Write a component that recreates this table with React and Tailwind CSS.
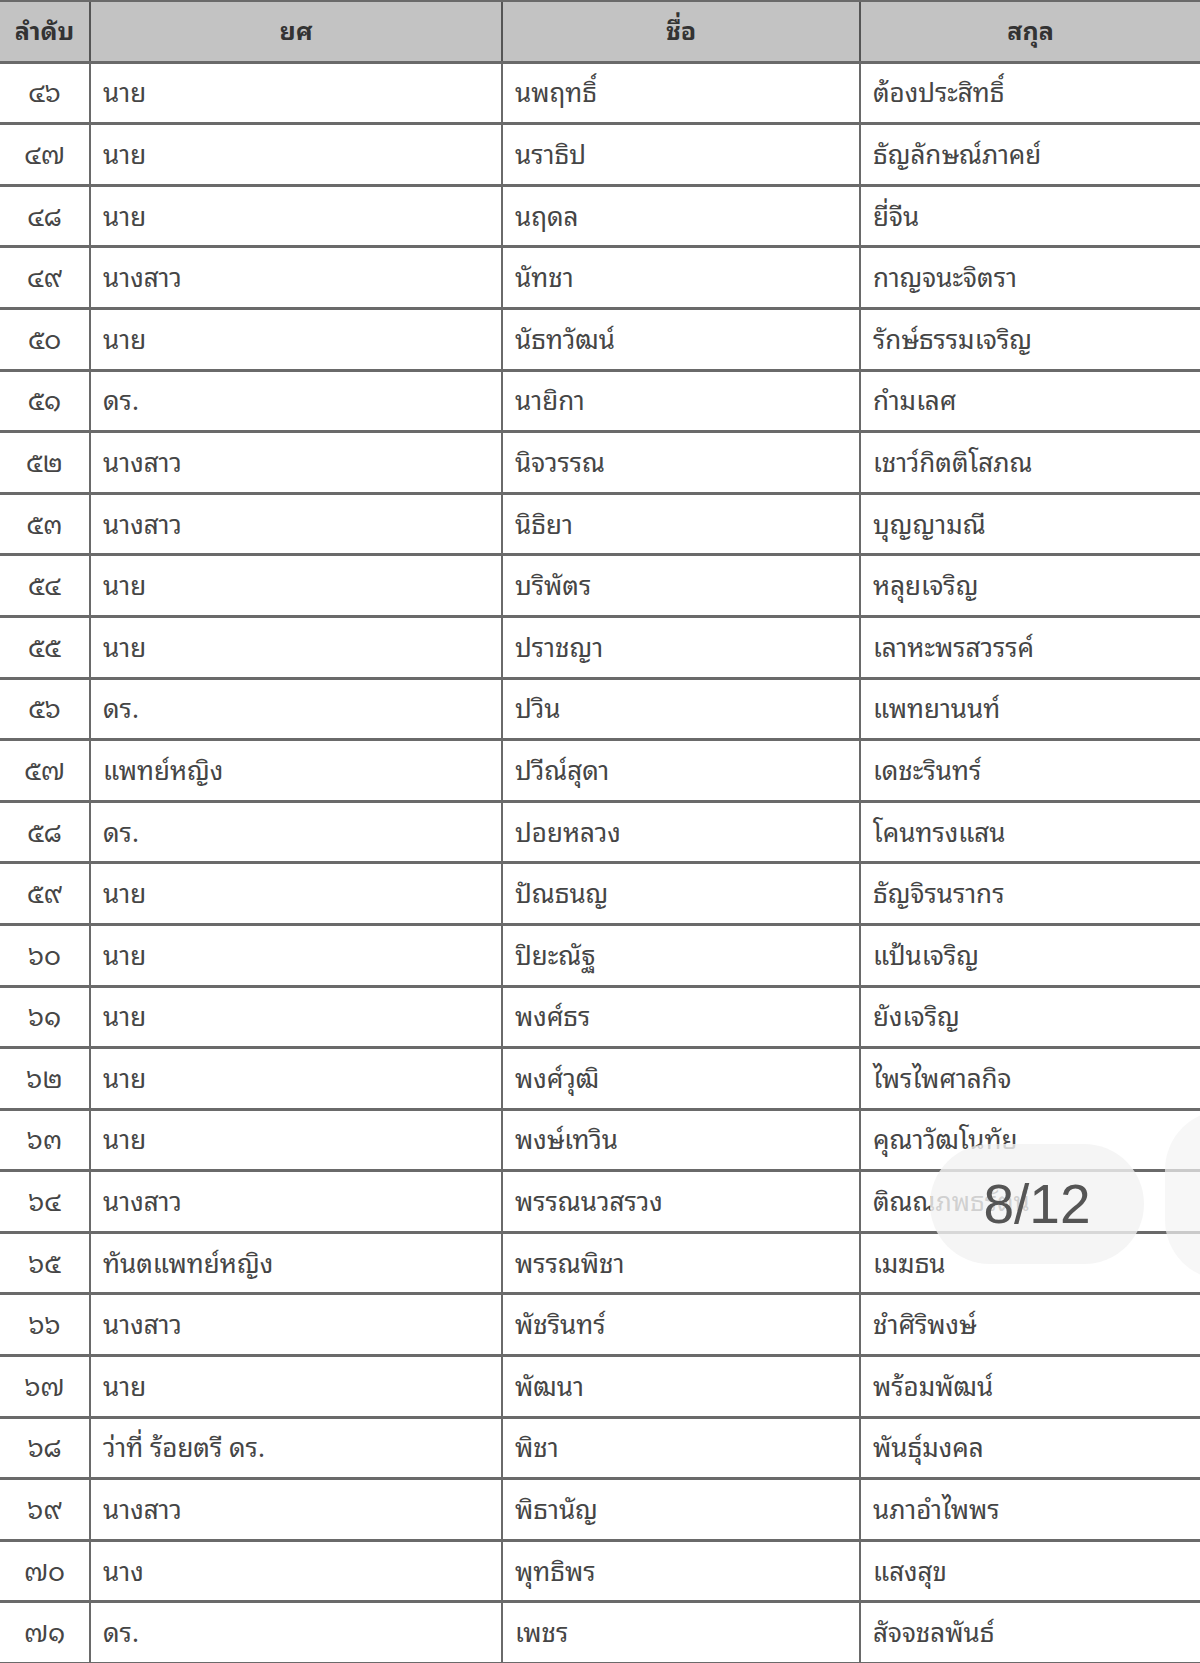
import React from "react";

const rows = [
  ["๔๖", "นาย", "นพฤทธิ์", "ต้องประสิทธิ์"],
  ["๔๗", "นาย", "นราธิป", "ธัญลักษณ์ภาคย์"],
  ["๔๘", "นาย", "นฤดล", "ยี่จีน"],
  ["๔๙", "นางสาว", "นัทชา", "กาญจนะจิตรา"],
  ["๕๐", "นาย", "นัธทวัฒน์", "รักษ์ธรรมเจริญ"],
  ["๕๑", "ดร.", "นายิกา", "กำมเลศ"],
  ["๕๒", "นางสาว", "นิจวรรณ", "เชาว์กิตติโสภณ"],
  ["๕๓", "นางสาว", "นิธิยา", "บุญญามณี"],
  ["๕๔", "นาย", "บริพัตร", "หลุยเจริญ"],
  ["๕๕", "นาย", "ปราชญา", "เลาหะพรสวรรค์"],
  ["๕๖", "ดร.", "ปวิน", "แพทยานนท์"],
  ["๕๗", "แพทย์หญิง", "ปวีณ์สุดา", "เดชะรินทร์"],
  ["๕๘", "ดร.", "ปอยหลวง", "โคนทรงแสน"],
  ["๕๙", "นาย", "ปัณธนญ", "ธัญจิรนรากร"],
  ["๖๐", "นาย", "ปิยะณัฐ", "แป้นเจริญ"],
  ["๖๑", "นาย", "พงศ์ธร", "ยังเจริญ"],
  ["๖๒", "นาย", "พงศ์วุฒิ", "ไพรไพศาลกิจ"],
  ["๖๓", "นาย", "พงษ์เทวิน", "คุณาวัฒโนทัย"],
  ["๖๔", "นางสาว", "พรรณนวสรวง", "ติณณภพธรัตน์"],
  ["๖๕", "ทันตแพทย์หญิง", "พรรณพิชา", "เมฆธน"],
  ["๖๖", "นางสาว", "พัชรินทร์", "ชำศิริพงษ์"],
  ["๖๗", "นาย", "พัฒนา", "พร้อมพัฒน์"],
  ["๖๘", "ว่าที่ ร้อยตรี ดร.", "พิชา", "พันธุ์มงคล"],
  ["๖๙", "นางสาว", "พิธานัญ", "นภาอำไพพร"],
  ["๗๐", "นาง", "พุทธิพร", "แสงสุข"],
  ["๗๑", "ดร.", "เพชร", "สัจจชลพันธ์"],
];

const grid = "grid grid-cols-[91px_412px_358px_1fr] h-[61.6px] border-b-[3px] border-[#6a6a6a]";

export default function App() {
  return (
    <div
      className="relative w-[1200px] h-[1663px] overflow-hidden bg-white text-[#454545]"
      style={{ fontFamily: '"Noto Sans Thai Looped", "Loma", "Garuda", "Norasi", "Noto Sans Thai", "DejaVu Sans", sans-serif' }}
    >
      <div className="border-t-2 border-[#6a6a6a]">
        <div className={grid + " bg-[#c3c3c3] font-bold text-[25px] text-[#333]"}>
          <div className="flex items-center justify-center pb-[3px] border-r-2 border-[#555]">ลำดับ</div>
          <div className="flex items-center justify-center pb-[3px] border-r-2 border-[#555]">ยศ</div>
          <div className="flex items-center justify-center pb-[3px] border-r-2 border-[#555]">ชื่อ</div>
          <div className="flex items-center justify-center pb-[3px]">สกุล</div>
        </div>
        {rows.map((r) => (
          <div key={r[0]} className={grid + " text-[26px]"}>
            <div className="flex items-center justify-center pb-[4px] border-r-2 border-[#6a6a6a]">{r[0]}</div>
            <div className="flex items-center pl-[12px] pb-[4px] border-r-2 border-[#6a6a6a]">{r[1]}</div>
            <div className="flex items-center pl-[12px] pb-[4px] border-r-2 border-[#6a6a6a]">{r[2]}</div>
            <div className="flex items-center pl-[12px] pb-[4px]">{r[3]}</div>
          </div>
        ))}
      </div>
      <div className="absolute left-[930px] top-[1144px] w-[214px] h-[120px] rounded-full bg-[#f2f2f2]/80 flex items-center justify-center">
        <span className="text-[55px] text-[#555]" style={{ fontFamily: '"Liberation Sans", sans-serif' }}>
          8/12
        </span>
      </div>
      <div className="absolute left-[1165px] top-[1110px] w-[120px] h-[170px] rounded-full bg-[#f4f4f4]/70" />
    </div>
  );
}
